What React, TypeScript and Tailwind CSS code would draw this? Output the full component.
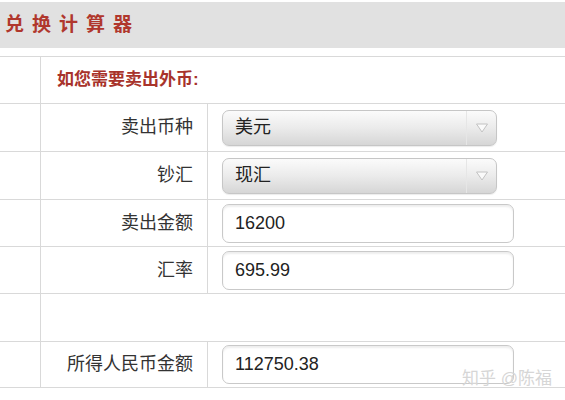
import React from "react";

const font = { fontFamily: '"Liberation Sans", "Noto Sans CJK SC", sans-serif' };

function Select({ value }: { value: string }) {
  return (
    <div className="flex h-[36px] w-[275px] items-stretch overflow-hidden rounded-[7px] border border-[#c6c6c6] bg-gradient-to-b from-[#fbfbfb] via-[#ebebeb] to-[#d6d6d6] shadow-[0_1px_1px_rgba(0,0,0,0.08)]">
      <div className="flex flex-1 items-center pl-[12px] text-[18px] text-[#222]">{value}</div>
      <div className="flex w-[30px] items-center justify-center border-l border-[#e6e6e6]">
        <svg width="14" height="12" viewBox="0 0 14 12">
          <path d="M1.5 2 L12.5 2 L7 10 Z" fill="#fafafa" stroke="#c2c2c2" strokeWidth="1" strokeLinejoin="round" />
        </svg>
      </div>
    </div>
  );
}

function Field({ value }: { value: string }) {
  return (
    <div className="flex h-[39px] w-[292px] items-center rounded-[7px] border border-[#c9c9c9] bg-white pl-[12px] text-[18px] text-[#222] shadow-[inset_0_2px_2px_rgba(0,0,0,0.07)]">
      {value}
    </div>
  );
}

function Row({
  h,
  label,
  children,
}: {
  h: string;
  label?: string;
  children?: React.ReactNode;
}) {
  return (
    <div className={`flex ${h} border-b border-[#d9d9d9]`}>
      <div className="w-[41px] shrink-0 border-r border-[#d9d9d9]" />
      <div className="flex w-[167px] shrink-0 items-center justify-end border-r border-[#d9d9d9] pr-[14px] text-[18px] text-[#333]">
        {label}
      </div>
      <div className="flex flex-1 items-center pl-[14px]">{children}</div>
    </div>
  );
}

export default function App() {
  return (
    <div className="relative h-[400px] w-[565px] overflow-hidden bg-white" style={font}>
      {/* HEADER */}
      <div className="mt-[2px] flex h-[46px] items-center bg-[#e1e1e1] pl-[5px]">
        <h1 className="text-[19px] font-bold tracking-[8px] text-[#b0372d]">兑换计算器</h1>
      </div>

      {/* TABLE */}
      <div className="mt-[8px] border-t border-[#d9d9d9]">
        <div className="flex h-[47px] border-b border-[#d9d9d9]">
          <div className="w-[41px] shrink-0 border-r border-[#d9d9d9]" />
          <div className="flex flex-1 items-center pl-[16px] text-[17px] font-bold text-[#a8332b]">
            如您需要卖出外币:
          </div>
        </div>
        <Row h="h-[48px]" label="卖出币种">
          <Select value="美元" />
        </Row>
        <Row h="h-[48px]" label="钞汇">
          <Select value="现汇" />
        </Row>
        <Row h="h-[47px]" label="卖出金额">
          <Field value="16200" />
        </Row>
        <Row h="h-[47px]" label="汇率">
          <Field value="695.99" />
        </Row>
        <div className="flex h-[48px] border-b border-[#d9d9d9]">
          <div className="w-[41px] shrink-0 border-r border-[#d9d9d9]" />
          <div className="flex-1" />
        </div>
        <Row h="h-[46px]" label="所得人民币金额">
          <Field value="112750.38" />
        </Row>
      </div>

      {/* watermark */}
      <div className="absolute left-[462px] top-[366px] text-[17px] text-[#d6d6d6]">知乎 @陈福</div>
    </div>
  );
}
